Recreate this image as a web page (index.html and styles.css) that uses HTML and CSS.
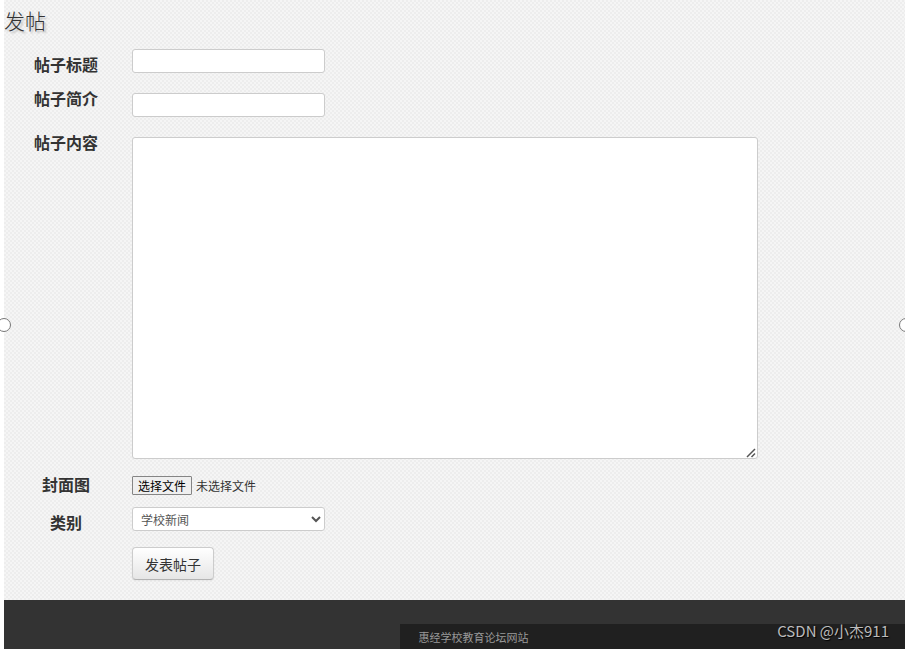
FILE: index.html
```
<!DOCTYPE html>
<html lang="zh-CN">
<head>
  <meta charset="UTF-8">
  <meta name="viewport" content="width=device-width, initial-scale=1.0">
  <title>发帖</title>
  <link rel="stylesheet" href="styles.css">
</head>
<body>

  <div class="page">
    <main class="content">
      <h1>发帖</h1>

      <form class="post-form">
        <label class="low" for="title">帖子标题</label>
        <input class="field" type="text" id="title" name="title">

        <label for="intro">帖子简介</label>
        <input class="field low" type="text" id="intro" name="intro">

        <label class="content-label" for="content">帖子内容</label>
        <div class="editor low">
          <textarea id="content" name="content"></textarea>
          <svg class="grip" viewBox="0 0 10 10" width="10" height="10">
            <path d="M1 9 L9 1 M5.5 9 L9 5.5" stroke="#555" stroke-width="1.5" fill="none"/>
          </svg>
        </div>

        <label class="low" for="cover">封面图</label>
        <div class="file low">
          <input type="file" id="cover" name="cover">
          <label class="file-button" for="cover">选择文件</label>
          <span>未选择文件</span>
        </div>

        <label class="low" for="type">类别</label>
        <select class="field" id="type" name="type">
          <option>学校新闻</option>
        </select>

        <button class="submit low" type="submit">发表帖子</button>
      </form>
    </main>

    <footer>
      <div class="footer-bar">惠经学校教育论坛网站</div>
    </footer>

    <span class="handle handle-left"></span>
    <span class="handle handle-right"></span>
  </div>

  <div class="watermark">CSDN @小杰911</div>

</body>
</html>
```

FILE: styles.css
```
* {
  box-sizing: border-box;
}

body {
  margin: 0;
  background: #fff;
  color: #333;
  font-family: "Noto Sans CJK SC", sans-serif;
  overflow: hidden;
}

.page {
  position: relative;
  display: flex;
  flex-direction: column;
  min-height: 100vh;
  margin-left: 4px;
  background-color: #f5f5f5;
  background-image: conic-gradient(#ededed 25%, transparent 0 50%, #ededed 0 75%, transparent 0);
  background-size: 4px 4px;
}

.content {
  padding: 6px 0 20px;
}

h1 {
  margin: 0 0 15px;
  font-size: 21px;
  font-weight: 300;
  line-height: 28px;
  text-shadow: 2px 2px 2px #bbb;
}

/* labels on the left, controls on the right */
.post-form {
  display: grid;
  grid-template-columns: 124px 1fr;
  grid-template-rows: 28px 30px 332px 28px 28px 35px;
  gap: 10px 4px;
  align-items: start;
  justify-items: start;
}

.post-form > label {
  justify-self: center;
  padding-bottom: 2px;
  font-size: 16px;
  font-weight: bold;
  line-height: 22px;
}

.post-form > .low {
  align-self: end;
}

.post-form > .content-label {
  padding-top: 4px;
}

.field,
textarea {
  margin: 0;
  border: 1px solid #ccc;
  border-radius: 3px;
  background: #fff;
  color: #555;
  font-family: inherit;
  font-size: 12px;
}

.field {
  width: 193px;
  height: 24px;
  padding: 0 4px;
}

.editor {
  position: relative;
  width: 81%;
}

textarea {
  display: block;
  width: 100%;
  height: 322px;
  padding: 4px 6px;
  resize: none;
}

.grip {
  position: absolute;
  right: 2px;
  bottom: 1px;
}

.file {
  display: flex;
  align-items: center;
  gap: 4px;
  height: 24px;
  font-size: 12px;
}

.file input {
  position: absolute;
  width: 1px;
  height: 1px;
  opacity: 0;
}

.file-button {
  padding: 0 5px;
  border: 1px solid #858585;
  border-radius: 1px;
  background: #efefef;
  color: #000;
  line-height: 17px;
}

.submit {
  grid-column: 2;
  height: 33px;
  padding: 0 12px;
  border: 1px solid #ccc;
  border-bottom-color: #b3b3b3;
  border-radius: 4px;
  background: linear-gradient(#fff, #e6e6e6);
  box-shadow: 0 1px 2px rgba(0, 0, 0, 0.05);
  color: #333;
  font-family: inherit;
  font-size: 14px;
}

footer {
  flex: 1;
  padding-top: 24px;
  background: #333;
}

.footer-bar {
  margin-left: 44%;
  padding-left: 18px;
  background: #202020;
  color: #999;
  font-size: 11px;
  line-height: 26px;
}

.handle {
  position: absolute;
  top: 318px;
  width: 14px;
  height: 14px;
  border: 1px solid #777;
  border-radius: 50%;
  background: #fff;
}

.handle-left {
  left: -7px;
}

.handle-right {
  right: -8px;
}

.watermark {
  position: absolute;
  right: 16px;
  bottom: 8px;
  color: #bbb;
  font-size: 15px;
  line-height: 20px;
  text-shadow: 1px 1px 1px #000;
}
```
